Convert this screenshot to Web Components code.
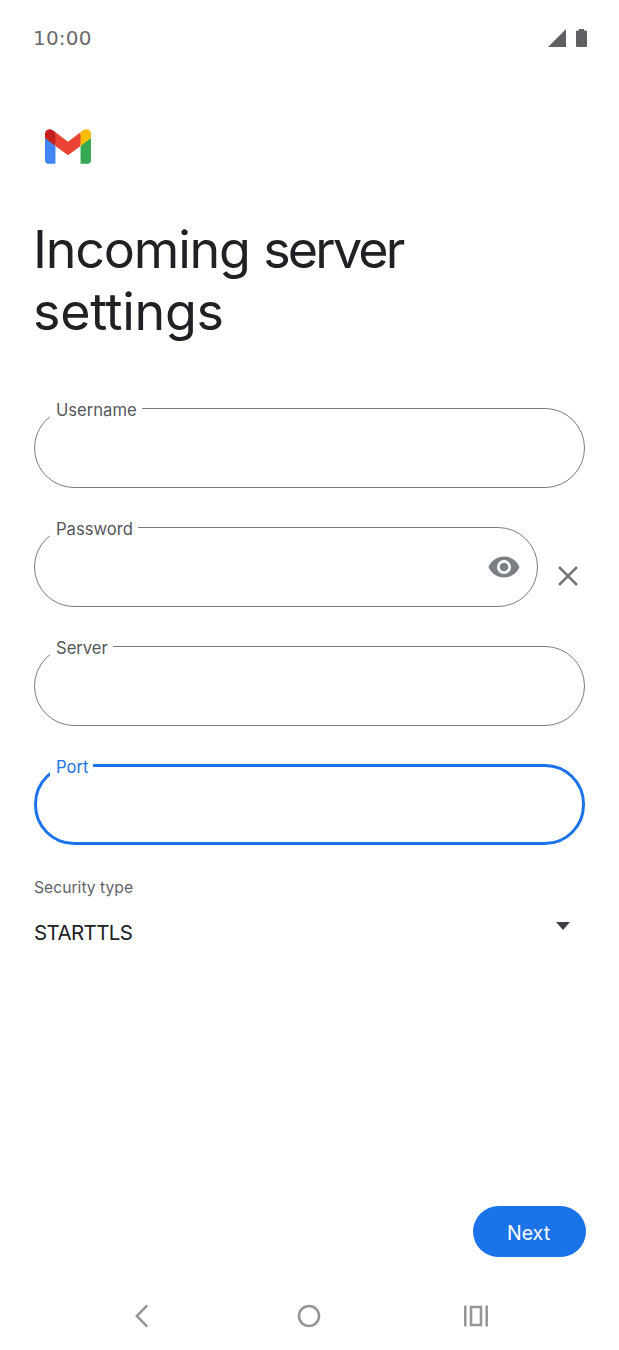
<!DOCTYPE html>
<html lang="en">
<head>
<meta charset="utf-8">
<title>Incoming server settings</title>
<style>
  html, body { margin: 0; background: #fff; }
</style>
</head>
<body>
<server-settings-screen></server-settings-screen>

<script>
// Status bar along the top: clock on the left, signal and battery on the right
class StatusBar extends HTMLElement {
  constructor() {
    super();
    this.attachShadow({ mode: 'open' });
    this.shadowRoot.innerHTML = `
      <style>
        :host {
          display: flex;
          justify-content: space-between;
          align-items: center;
          height: 28px;
          padding: 24px 32px 0 33px;
          color: #6a6a6c;
          font: 400 20px/28px "DejaVu Sans", sans-serif;
          letter-spacing: 0.2px;
        }
        svg { display: block; }
      </style>
      <span>10:00</span>
      <svg width="39" height="18" viewBox="0 0 39 18" fill="#5f6063">
        <path d="M0 18 18 0v18z"/>
        <path d="M29 1.500h2V0h5v1.500h2a1 1 0 0 1 1 1V17a1 1 0 0 1-1 1H29a1 1 0 0 1-1-1V2.500a1 1 0 0 1 1-1z"/>
      </svg>
    `;
  }
}

// Gmail mark
class GmailLogo extends HTMLElement {
  constructor() {
    super();
    this.attachShadow({ mode: 'open' });
    this.shadowRoot.innerHTML = `
      <style>
        :host { display: block; width: 46px; height: 35px; }
        svg { display: block; width: 100%; height: 100%; }
      </style>
      <svg viewBox="0 0 256 193">
        <path fill="#4285F4" d="M58.182 192.05V93.14L27.507 65.077 0 49.504v125.091c0 9.658 7.825 17.455 17.455 17.455h40.727Z"/>
        <path fill="#34A853" d="M197.818 192.05h40.727c9.659 0 17.455-7.826 17.455-17.455V49.505l-31.156 17.837-27.026 25.798v98.91Z"/>
        <path fill="#EA4335" d="m58.182 93.14-4.174-38.647 4.174-36.989L128 69.868l69.818-52.364 4.669 34.992-4.669 40.644L128 145.504z"/>
        <path fill="#FBBC04" d="M197.818 17.504V93.14L256 49.504V26.231c0-21.585-24.64-33.89-41.89-20.945l-16.292 12.218Z"/>
        <path fill="#C5221F" d="m0 49.504 26.759 20.07L58.182 93.14V17.504L41.89 5.286C24.61-7.66 0 4.646 0 26.23v23.273Z"/>
      </svg>
    `;
  }
}

// Outlined pill field, the label sits in a notch of the border.
// The fieldset/legend pair cuts the notch for us.
class OutlinedField extends HTMLElement {
  constructor() {
    super();
    this.attachShadow({ mode: 'open' });
    this.shadowRoot.innerHTML = `
      <style>
        :host {
          display: block;
          --line: #7a7c80;
          --label: #55575b;
          --stroke: 1px;
          --notch: 15px;
        }
        :host([focused]) {
          --line: #1a73e8;
          --label: #1a73e8;
          --stroke: 3px;
          --notch: 13px;
        }
        fieldset {
          box-sizing: border-box;
          height: 92px;
          margin: 0;
          padding: 0 17px 12px 0;
          border: var(--stroke) solid var(--line);
          border-radius: 40px;
          display: flex;
          justify-content: flex-end;
          align-items: center;
        }
        legend {
          margin-left: var(--notch);
          padding: 4px 5px 0 6px;
          color: var(--label);
          font: 400 16.6px/20px Inter, "Liberation Sans", sans-serif;
        }
        ::slotted(svg) { display: block; }
      </style>
      <fieldset>
        <legend></legend>
        <slot></slot>
      </fieldset>
    `;
  }
  connectedCallback() {
    this.shadowRoot.querySelector('legend').textContent = this.getAttribute('label');
  }
}

// Security type row with its dropdown arrow
class SelectRow extends HTMLElement {
  constructor() {
    super();
    this.attachShadow({ mode: 'open' });
    this.shadowRoot.innerHTML = `
      <style>
        :host { display: block; }
        .caption {
          color: #5f6368;
          font: 400 15.7px/20px Inter, "Liberation Sans", sans-serif;
        }
        .row {
          display: flex;
          justify-content: space-between;
          margin-top: 20px;
          padding-right: 15px;
        }
        .value {
          color: #202124;
          font: 400 20.5px/30px Inter, "Liberation Sans", sans-serif;
          letter-spacing: -0.6px;
        }
        svg { display: block; margin-top: 4px; }
      </style>
      <div class="caption"></div>
      <div class="row">
        <span class="value"><slot></slot></span>
        <svg width="14" height="8" viewBox="0 0 14 8"><path fill="#3c4043" d="M0 0h14L7 8z"/></svg>
      </div>
    `;
  }
  connectedCallback() {
    this.shadowRoot.querySelector('.caption').textContent = this.getAttribute('caption');
  }
}

// Android three-button navigation
class NavBar extends HTMLElement {
  constructor() {
    super();
    this.attachShadow({ mode: 'open' });
    this.shadowRoot.innerHTML = `
      <style>
        :host {
          display: flex;
          justify-content: center;
          align-items: center;
          gap: 143px;
          height: 24px;
          padding-right: 2px;
        }
        svg { display: block; fill: none; stroke: #969696; stroke-width: 2.6; }
      </style>
      <svg width="24" height="24" viewBox="0 0 24 24"><path d="M18.500 2 7 12.500 18.500 23" transform="translate(.5 -.5) scale(.9 1)"/></svg>
      <svg width="24" height="24" viewBox="0 0 24 24"><circle cx="12" cy="12" r="10"/></svg>
      <svg width="24" height="24" viewBox="0 0 24 24"><path d="M1.250 1.500v21M22.750 1.500v21M7 3h10v18H7z"/></svg>
    `;
  }
}

// The whole screen
class ServerSettingsScreen extends HTMLElement {
  constructor() {
    super();
    this.attachShadow({ mode: 'open' });
    this.shadowRoot.innerHTML = `
      <style>
        :host {
          display: flex;
          flex-direction: column;
          box-sizing: border-box;
          width: 619px;
          height: 1350px;
          background: #fff;
          overflow: hidden;
        }
        gmail-logo { margin: 77px 0 0 45px; }
        h1 {
          margin: 55px 0 0 33px;
          color: #202124;
          font: 400 52px/62px Inter, "Liberation Sans", sans-serif;
          letter-spacing: -1.2px;
        }
        h1 .tight { letter-spacing: -2.8px; }
        h1 .loose { letter-spacing: -0.3px; }
        .fields {
          display: flex;
          flex-direction: column;
          gap: 27px;
          margin: 53px 34px 0;
        }
        .with-clear { display: flex; align-items: center; }
        .with-clear outlined-field { flex: 1; }
        .clear { margin: 30px 7px 0 20px; display: block; }
        select-row { margin: 33px 34px 0; }
        .next {
          align-self: flex-end;
          margin: auto 33px 0 0;
          width: 113px;
          height: 51px;
          border: 0;
          border-radius: 26px;
          background: #1a73e8;
          color: #fff;
          font: 400 19.500px/20px Inter, "Liberation Sans", sans-serif;
          padding: 3px 2px 0 0;
        }
        nav-bar { margin: 47px 0 22px; }
      </style>
      <status-bar></status-bar>
      <gmail-logo></gmail-logo>
      <h1>Incoming <span class="tight">server</span><br><span class="loose">settings</span></h1>
      <div class="fields">
        <outlined-field label="Username"></outlined-field>
        <div class="with-clear">
          <outlined-field label="Password">
            <svg width="32" height="22" viewBox="0 0 32 22">
              <path fill="#7c8086" fill-rule="evenodd" d="M16 0.500C9 0.500 3 4.800 0.500 11 3 17.200 9 21.500 16 21.500S29 17.200 31.500 11C29 4.800 23 0.500 16 0.500zM16 18a7 7 0 1 1 0-14 7 7 0 0 1 0 14z"/>
              <circle cx="16" cy="11" r="4.300" fill="#7c8086"/>
            </svg>
          </outlined-field>
          <svg class="clear" width="20" height="20" viewBox="0 0 20 20"><path d="M1 1l18 18M19 1L1 19" stroke="#75777b" stroke-width="2.600" fill="none"/></svg>
        </div>
        <outlined-field label="Server"></outlined-field>
        <outlined-field label="Port" focused></outlined-field>
      </div>
      <select-row caption="Security type">STARTTLS</select-row>
      <button class="next">Next</button>
      <nav-bar></nav-bar>
    `;
  }
}

customElements.define('status-bar', StatusBar);
customElements.define('gmail-logo', GmailLogo);
customElements.define('outlined-field', OutlinedField);
customElements.define('select-row', SelectRow);
customElements.define('nav-bar', NavBar);
customElements.define('server-settings-screen', ServerSettingsScreen);
</script>
</body>
</html>
